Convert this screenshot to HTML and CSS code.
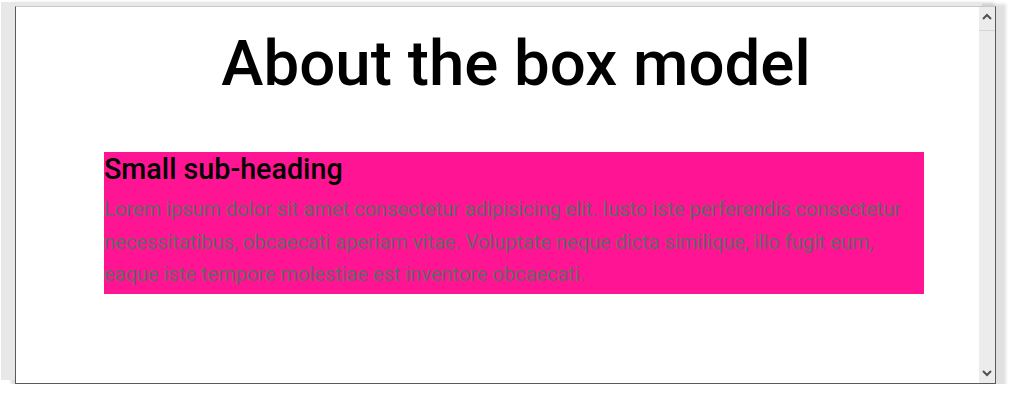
FILE: index.html
```html
<!DOCTYPE html>
<html>
<head>
<meta charset="utf-8">
<link rel="stylesheet" href="styles.css">
</head>
<body>
<div class="window">
  <div class="viewport">
    <div class="page">
      <h1 class="title">About the box model</h1>
      <div class="box">
        <h2 class="sub">Small sub-heading</h2>
        <p class="text">Lorem ipsum dolor sit amet consectetur adipisicing elit. Iusto iste perferendis consectetur necessitatibus, obcaecati aperiam vitae. Voluptate neque dicta similique, illo fugit eum, eaque iste tempore molestiae est inventore obcaecati.</p>
      </div>
    </div>
  </div>
  <div class="scrollbar">
    <svg class="arrow" width="10" height="7" viewBox="0 0 10 7"><path d="M1 6 L5 2 L9 6" fill="none" stroke="#505050" stroke-width="2"/></svg>
    <div class="track"></div>
    <svg class="arrow" width="10" height="7" viewBox="0 0 10 7"><path d="M1 1 L5 5 L9 1" fill="none" stroke="#505050" stroke-width="2"/></svg>
  </div>
</div>
</body>
</html>
```
FILE: styles.css
```css
html, body {
  margin: 0;
  padding: 0;
  background: #fff;
}
body {
  font-family: Roboto, "Liberation Sans", sans-serif;
  padding: 6px 0 0 15px;
}
.window {
  display: flex;
  width: 979px;
  height: 376px;
  border-top: 1px solid #c8c8c8;
  border-left: 1px solid #5a5a5a;
  border-right: 1px solid #5a5a5a;
  border-bottom: 1px solid #5a5a5a;
  background: #fff;
  box-shadow: -14px -4px 0 0 #e8e8e8, -2px -3px 3px 0 #d0d0d0, 3px 5px 3px 7px #e0e0e0;
}
.viewport {
  flex: 1;
  overflow: hidden;
}
.page {
  margin-left: 88px;
  width: 820px;
}
.title {
  margin: 19px 0 0 4px;
  font-size: 63.6px;
  font-weight: 500;
  line-height: 75px;
  text-align: center;
  color: #000;
}
.box {
  margin-top: 51px;
  background: #ff1493;
  padding: 1px 0 3px;
}
.sub {
  margin: 0;
  font-size: 28.7px;
  font-weight: 500;
  line-height: 32px;
  color: #000;
}
.text {
  margin: 8px 0 0;
  font-size: 20px;
  line-height: 32.5px;
  color: #666;
}
.scrollbar {
  width: 16px;
  background: #ececec;
  display: flex;
  flex-direction: column;
  align-items: center;
}
.arrow {
  margin: 6px 0;
}
.track {
  flex: 1;
  width: 100%;
  border-top: 1px solid #d6d6d6;
  margin-top: 4px;
}
```
